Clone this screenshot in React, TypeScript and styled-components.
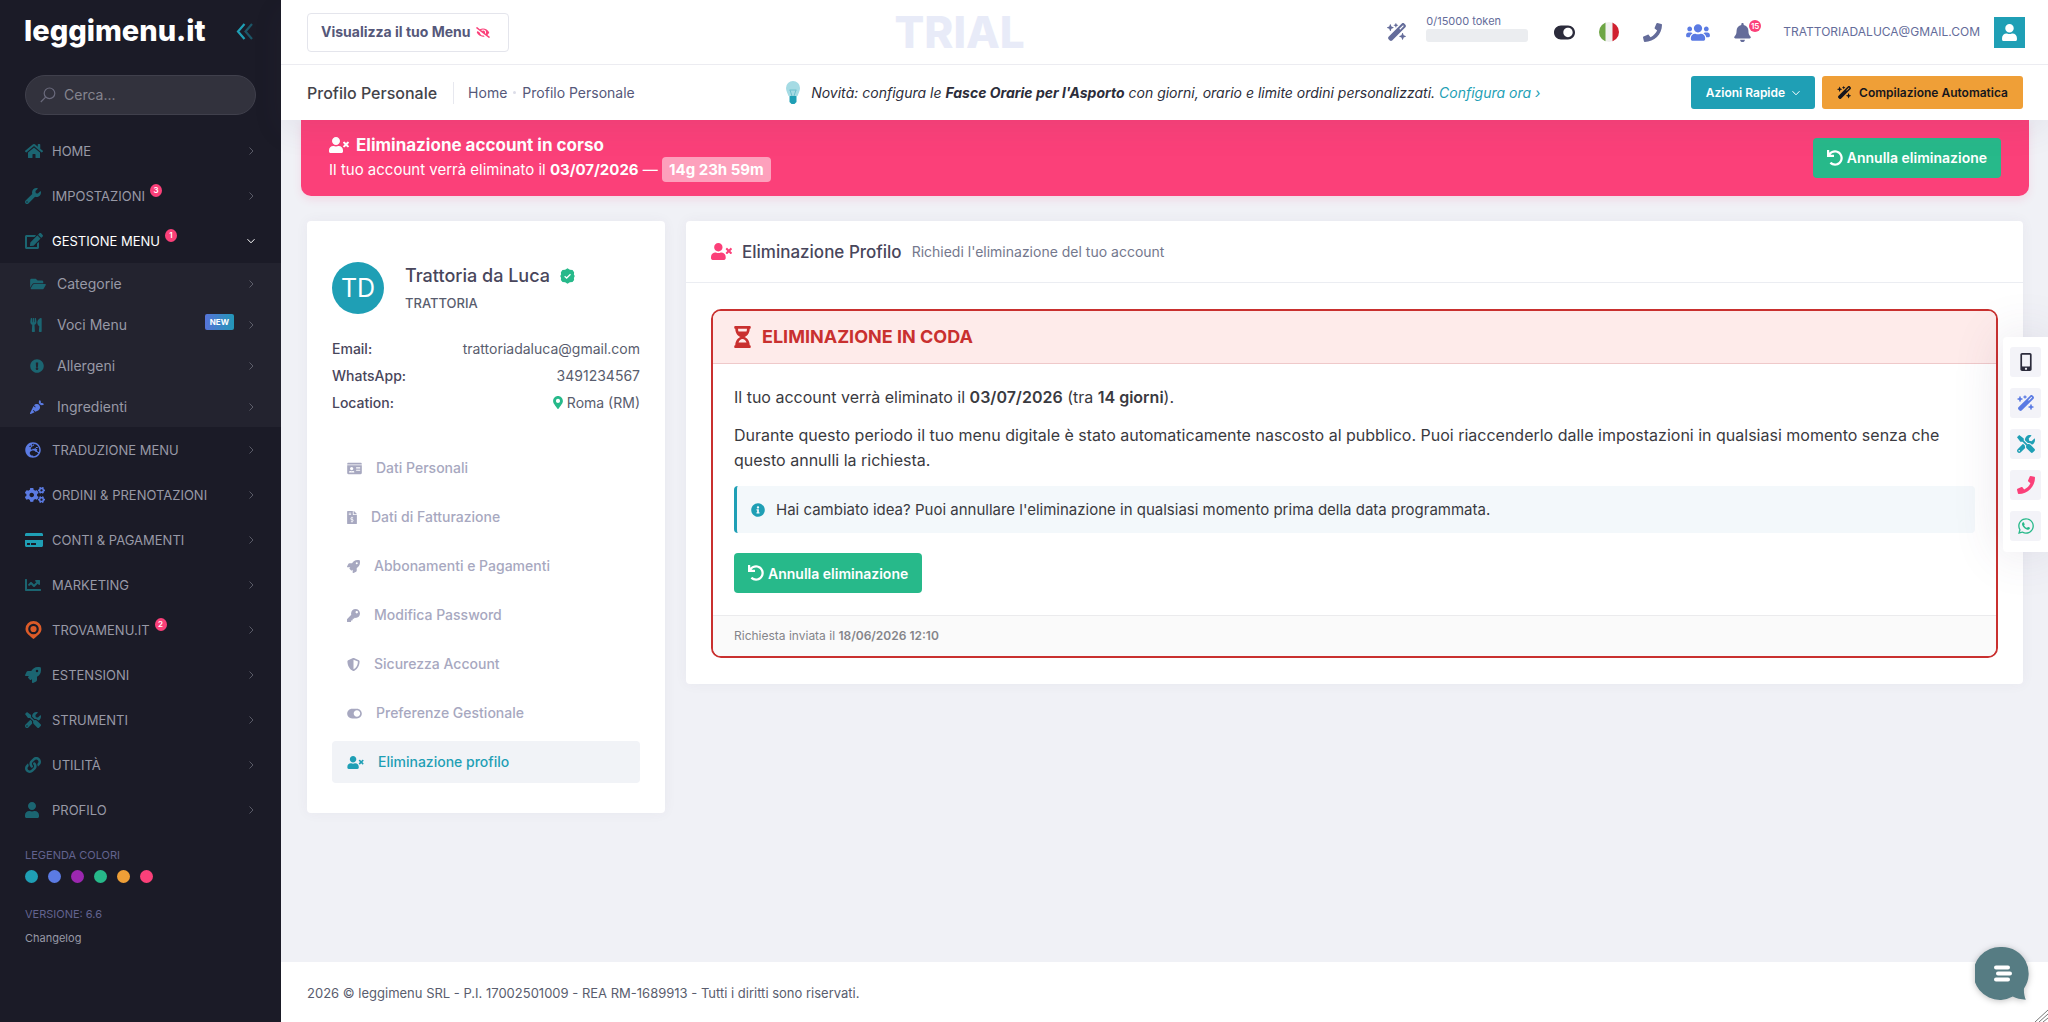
import React from "react";
import styled, { createGlobalStyle, css } from "styled-components";
import {
  FaHome, FaWrench, FaEdit, FaFolderOpen, FaUtensils, FaExclamationCircle, FaCarrot,
  FaGlobeEurope, FaCogs, FaCreditCard, FaChartLine, FaRocket, FaTools, FaLink, FaUser,
  FaEyeSlash, FaToggleOn, FaPhone, FaUsers, FaBell, FaUserTimes, FaMapMarkerAlt, FaIdCard,
  FaFileInvoiceDollar, FaKey, FaShieldAlt, FaHourglassHalf, FaInfoCircle, FaUndo,
  FaMobileAlt, FaWhatsapp,
} from "react-icons/fa";
import { FaWandMagicSparkles } from "react-icons/fa6";

const c = {
  side: "#1b1b27",
  sideSub: "#23232f",
  teal: "#1f9fb5",
  tealDim: "#1b6571",
  blue: "#5b7be3",
  green: "#27b98a",
  pink: "#fb4079",
  orange: "#ef9f37",
  red: "#c9302f",
  violet: "#646c9a",
  ink: "#48465b",
  slate: "#595d6e",
};

const GlobalStyle = createGlobalStyle`
  * { box-sizing: border-box; }
  body {
    margin: 0;
    background: #f0f1f6;
    color: ${c.ink};
    font: 400 14px/20px Inter, "Liberation Sans", sans-serif;
  }
  button, input { font: inherit; }
  button { cursor: pointer; }
  a { color: inherit; text-decoration: none; }
  h1, h2, h3, p, ul, dl, dd { margin: 0; padding: 0; }
  ul { list-style: none; }
`;

const Icon = styled.span<{ $h?: number; $w?: number; $color?: string }>`
  display: inline-flex;
  flex: none;
  color: ${(p) => p.$color ?? "inherit"};
  svg {
    display: block;
    flex: none;
    width: ${(p) => p.$w ?? p.$h ?? 16}px;
    height: ${(p) => p.$h ?? 16}px;
  }
`;

const Shell = styled.div`
  display: flex;
  min-height: 100vh;
`;

/* ---------- Sidebar ---------- */
const Sidebar = styled.aside`
  flex: none;
  width: 281px;
  background: ${c.side};
  color: #9899a6;
`;
const Brand = styled.div`
  display: flex;
  align-items: center;
  justify-content: space-between;
  height: 64px;
  padding: 0 27px 2px 24px;
`;
const Logo = styled.a`
  color: #fff;
  font-size: 29px;
  line-height: 40px;
  font-weight: 800;
`;
const BareButton = styled.button`
  display: inline-flex;
  align-items: center;
  padding: 0;
  border: 0;
  background: none;
  color: inherit;
`;
const SearchBox = styled.label`
  display: flex;
  align-items: center;
  gap: 8px;
  height: 40px;
  margin: 11px 25px 13px;
  padding: 0 14px;
  border: 1px solid #40404c;
  border-radius: 20px;
  background: #32323d;
  input {
    flex: 1;
    min-width: 0;
    padding: 0;
    border: 0;
    outline: 0;
    background: none;
    color: #fff;
    font-size: 14px;
    &::placeholder { color: #85858f; opacity: 1; }
  }
`;
const NavLink = styled.a<{ $sub?: boolean; $active?: boolean }>`
  display: flex;
  align-items: center;
  height: ${(p) => (p.$sub ? 41 : 45)}px;
  padding: 0 26px 0 ${(p) => (p.$sub ? 30 : 25)}px;
  color: ${(p) => (p.$active ? "#fff" : "#9899a6")};
  font-size: ${(p) => (p.$sub ? 14 : 13)}px;
`;
const NavIcon = styled(Icon)`
  width: 27px;
`;
const SubList = styled.ul`
  background: ${c.sideSub};
`;
const Count = styled.span`
  display: grid;
  place-items: center;
  align-self: flex-start;
  width: 12px;
  height: 13px;
  margin: 11px 0 0 5px;
  border-radius: 50%;
  background: ${c.pink};
  color: #fff;
  font-size: 8px;
  line-height: 13px;
  font-weight: 600;
`;
const NewTag = styled.span`
  margin-left: auto;
  margin-right: 13px;
  margin-bottom: 5px;
  padding: 0 5px;
  border-radius: 2px;
  background: linear-gradient(90deg, #5673d8, #2397b8);
  color: #fff;
  font-size: 8px;
  line-height: 16px;
  font-weight: 700;
`;
const Chevron = styled.svg<{ $dim?: boolean }>`
  flex: none;
  width: 8px;
  height: 8px;
  fill: none;
  stroke: currentColor;
  opacity: ${(p) => (p.$dim ? 0.5 : 1)};
  margin-left: auto;
  ${NewTag} + & { margin-left: 0; }
`;
const SideNote = styled.div`
  padding: 13px 25px 0;
  font-size: 11px;
  line-height: 20px;
`;
const SideCaption = styled.div`
  color: #62638f;
`;
const Dots = styled.div`
  display: flex;
  gap: 10px;
  padding: 5px 0 21px;
`;
const Dot = styled.span<{ $color: string }>`
  width: 13px;
  height: 13px;
  border-radius: 50%;
  background: ${(p) => p.$color};
`;
const Changelog = styled.a`
  display: block;
  margin-top: 4px;
  color: #9899a6;
`;

/* ---------- Top bars ---------- */
const Main = styled.div`
  display: flex;
  flex: 1;
  flex-direction: column;
  min-width: 0;
`;
const Bars = styled.header`
  position: relative;
  z-index: 2;
  background: #fff;
  box-shadow: 0 10px 30px rgba(82, 63, 105, 0.08);
`;
const Bar = styled.div<{ $h: number; $line?: boolean }>`
  display: flex;
  align-items: center;
  justify-content: space-between;
  height: ${(p) => p.$h}px;
  padding: 0 ${(p) => (p.$line ? 23 : 25)}px 0 26px;
  border-bottom: ${(p) => (p.$line ? "1px solid #ececf1" : "0")};
`;
const PreviewButton = styled.button`
  display: flex;
  align-items: center;
  gap: 6px;
  height: 39px;
  padding: 0 18px 0 13px;
  border: 1px solid #e4e5ec;
  border-radius: 4px;
  background: #fff;
  color: #55587a;
  font-size: 14px;
  font-weight: 700;
`;
const Trial = styled.div`
  flex: 1;
  padding-left: 385px;
  color: #e8ebf8;
  font-size: 44px;
  line-height: 56px;
  font-weight: 800;
`;
const Tools = styled.div`
  display: flex;
  align-items: center;
  gap: 24px;
  color: ${c.violet};
`;
const TokenMeter = styled.div`
  width: 102px;
  margin: 0 2px 10px -5px;
  color: #646c9a;
  font-size: 11px;
  line-height: 16px;
`;
const Track = styled.div`
  height: 13px;
  border-radius: 3px;
  background: #ebedf0;
`;
const BellWrap = styled(BareButton)`
  position: relative;
`;
const BellCount = styled.span`
  position: absolute;
  top: -3px;
  right: -10px;
  padding: 0 2px;
  border-radius: 7px;
  background: ${c.pink};
  color: #fff;
  font-size: 8px;
  line-height: 12px;
  font-weight: 600;
`;
const Account = styled.a`
  display: flex;
  align-items: center;
  gap: 14px;
  margin-left: 8px;
  font-size: 12px;
`;
const AccountTile = styled.span`
  display: grid;
  place-items: center;
  width: 31px;
  height: 31px;
  background: ${c.teal};
  color: #fff;
`;
const Crumbs = styled.nav`
  display: flex;
  align-items: center;
  gap: 14px;
  color: #55587a;
  font-size: 14px;
`;
const PageTitle = styled.h1`
  padding-right: 16px;
  border-right: 1px solid #e7e8ef;
  color: #434349;
  font-size: 16px;
  line-height: 22px;
  font-weight: 500;
`;
const CrumbDot = styled.span`
  width: 3px;
  height: 3px;
  margin: 0 -8px;
  border-radius: 50%;
  background: #dcdde8;
`;
const News = styled.p`
  display: flex;
  align-items: center;
  gap: 10px;
  color: #2c2d3a;
  font-size: 14px;
  font-style: italic;
  a { color: ${c.teal}; }
`;
const Actions = styled.div`
  display: flex;
  gap: 7px;
`;
const ActionButton = styled.button<{ $bg: string; $fg: string }>`
  display: flex;
  align-items: center;
  gap: 7px;
  height: 33px;
  padding: 0 15px;
  border: 0;
  border-radius: 3px;
  background: ${(p) => p.$bg};
  color: ${(p) => p.$fg};
  font-size: 12px;
  font-weight: 600;
`;

/* ---------- Banner ---------- */
const Banner = styled.section`
  display: flex;
  align-items: center;
  justify-content: space-between;
  height: 76px;
  margin: 0 19px 0 20px;
  padding: 0 28px;
  border-radius: 0 0 10px 10px;
  background: ${c.pink};
  box-shadow: 0 4px 8px rgba(251, 64, 121, 0.12);
  color: #fff;
  font-size: 15px;
  line-height: 24px;
`;
const BannerText = styled.div`
  padding-bottom: 3px;
`;
const BannerTitle = styled.h2`
  display: flex;
  align-items: center;
  gap: 7px;
  font-size: 17px;
  line-height: 26px;
  font-weight: 700;
`;
const Countdown = styled.strong`
  padding: 3px 7px;
  border-radius: 4px;
  background: rgba(255, 255, 255, 0.5);
`;
const GreenButton = styled.button`
  display: inline-flex;
  align-items: center;
  gap: 4px;
  height: 40px;
  padding: 0 14px;
  border: 0;
  border-radius: 4px;
  background: ${c.green};
  color: #fff;
  font-size: 14px;
  font-weight: 600;
`;

/* ---------- Content ---------- */
const Content = styled.main`
  display: flex;
  flex: 1;
  align-items: flex-start;
  gap: 21px;
  padding: 25px 25px 40px 26px;
`;
const Card = styled.section`
  border-radius: 4px;
  background: #fff;
  box-shadow: 0 0 13px rgba(82, 63, 105, 0.05);
`;
const ProfileCard = styled(Card)`
  flex: none;
  width: 358px;
  padding: 41px 25px 30px;
`;
const Person = styled.div`
  display: flex;
  align-items: center;
  gap: 21px;
`;
const Avatar = styled.div`
  display: grid;
  place-items: center;
  width: 52px;
  height: 52px;
  border-radius: 50%;
  background: ${c.teal};
  color: #fff;
  font-size: 25px;
`;
const PersonName = styled.h2`
  display: flex;
  align-items: center;
  gap: 10px;
  font-size: 18px;
  line-height: 26px;
  font-weight: 500;
`;
const PersonKind = styled.div`
  margin-top: 3px;
  color: ${c.slate};
  font-size: 13px;
  line-height: 22px;
  font-weight: 500;
`;
const Facts = styled.dl`
  margin: 21px 0 31px;
  font-size: 14px;
  line-height: 27px;
  div { display: flex; justify-content: space-between; }
  dt { font-weight: 500; }
  dd { display: flex; align-items: center; gap: 4px; color: ${c.slate}; }
`;
const Menu = styled.ul`
  display: grid;
  gap: 7px;
`;
const MenuLink = styled.a<{ $active?: boolean }>`
  display: flex;
  align-items: center;
  gap: 14px;
  height: 42px;
  padding: 0 15px;
  border-radius: 4px;
  color: #a7a8c0;
  font-size: 14px;
  font-weight: 500;
  ${(p) => p.$active && css`background: #f1f3f7; color: ${c.teal};`}
`;
const MainCard = styled(Card)`
  flex: 1;
  min-width: 0;
`;
const CardHead = styled.header`
  display: flex;
  align-items: center;
  height: 62px;
  padding: 0 25px;
  border-bottom: 1px solid #ebedf2;
  h2 { margin: 0 10px; font-size: 17px; font-weight: 500; }
  p { color: #74788d; font-size: 14px; }
`;
const Queue = styled.article`
  margin: 26px 25px;
  overflow: hidden;
  border: 2px solid ${c.red};
  border-radius: 10px;
  color: #3a3a3f;
`;
const QueueHead = styled.h3`
  display: flex;
  align-items: center;
  gap: 11px;
  height: 53px;
  padding: 0 21px;
  border-bottom: 1px solid #efc9ca;
  background: #feebea;
  color: ${c.red};
  font-size: 18px;
  font-weight: 700;
`;
const QueueBody = styled.div`
  padding: 21px 21px 22px;
  font-size: 16px;
  line-height: 25px;
  p { margin-bottom: 13px; }
  strong { font-weight: 600; }
`;
const Hint = styled.div`
  display: flex;
  align-items: center;
  gap: 11px;
  height: 47px;
  margin: 13px 0 20px;
  padding: 0 14px;
  border-left: 3px solid ${c.teal};
  border-radius: 4px;
  background: #f3f8fb;
  font-size: 15px;
`;
const QueueFoot = styled.footer`
  padding: 10px 21px;
  border-top: 1px solid #ebebed;
  background: #fafafa;
  color: #85858a;
  font-size: 12px;
  line-height: 20px;
  strong { font-weight: 600; }
`;
const Footer = styled.footer`
  display: flex;
  align-items: center;
  height: 60px;
  padding: 2px 26px 0;
  background: #fff;
  color: ${c.slate};
  font-size: 13px;
`;

/* ---------- Floating items ---------- */
const Dock = styled.nav`
  position: fixed;
  z-index: 3;
  top: 337px;
  right: 0;
  display: grid;
  gap: 11px;
  padding: 10px 7px 11px;
  border-radius: 4px 0 0 4px;
  background: #fff;
  box-shadow: 0 0 50px rgba(82, 63, 105, 0.15);
`;
const DockButton = styled.button<{ $color: string }>`
  display: grid;
  place-items: center;
  width: 31px;
  height: 30px;
  padding: 0;
  border: 0;
  border-radius: 3px;
  background: #f3f3f8;
  color: ${(p) => p.$color};
`;
const ChatButton = styled(BareButton)`
  position: fixed;
  z-index: 4;
  right: 19px;
  bottom: 20px;
  filter: drop-shadow(0 1px 3px rgba(0, 0, 0, 0.25));
`;
const Grip = styled.svg`
  position: fixed;
  right: 0;
  bottom: 0;
`;

const Right = () => (
  <Chevron $dim viewBox="0 0 8 8"><path d="M2.500.500 6 4 2.500 7.500" /></Chevron>
);
const Down = () => (
  <Chevron viewBox="0 0 8 8"><path d="M.500 2.200 4 5.800 7.500 2.200" /></Chevron>
);
const Pin = () => (
  <svg viewBox="0 0 17 18">
    <path d="M8.500 0a8 8 0 0 1 8 8c0 4.200-4.500 7-8 10C5 15 .500 12.200.500 8a8 8 0 0 1 8-8Z" fill="#dc5b28" />
    <circle cx="8.500" cy="8" r="4.200" fill="#dc5b28" stroke={c.side} strokeWidth="2.200" />
  </svg>
);
const Collapse = () => (
  <svg width="18" height="17" viewBox="0 0 18 17" fill="none" strokeWidth="2.200" stroke={c.teal}>
    <path d="M8.500 1 2 8.500l6.500 7.500" />
    <path d="M16 1 9.500 8.500 16 16" opacity=".45" />
  </svg>
);
const SearchGlyph = () => (
  <svg width="16" height="16" viewBox="0 0 16 16" fill="none" stroke="#6a6a7c" strokeWidth="1.200">
    <circle cx="9.500" cy="6.300" r="5.300" />
    <path d="M5.600 10.200.800 15" />
  </svg>
);
const Bulb = () => (
  <svg width="16" height="24" viewBox="0 0 16 24">
    <path d="M8 0a7 7 0 0 1 7 7c0 3-1.500 5-2.500 8h-9C2.500 12 1 10 1 7a7 7 0 0 1 7-7Z" fill="#a5dbe4" />
    <path d="M5 9l2 6M11 9l-2 6M4.500 9h7" stroke="#6fc0cd" fill="none" />
    <path d="M4.500 15h7v6l-2 2h-3l-2-2Z" fill={c.teal} />
  </svg>
);
const Flag = () => (
  <svg width="20" height="20" viewBox="0 0 20 20">
    <clipPath id="flag-round"><circle cx="10" cy="10" r="10" /></clipPath>
    <g clipPath="url(#flag-round)">
      <path fill="#f0f0f0" d="M0 0h20v20H0z" />
      <path fill="#6da544" d="M0 0h6.500v20H0z" />
      <path fill="#d0202f" d="M13.500 0H20v20h-6.500z" />
    </g>
  </svg>
);
const Verified = () => (
  <svg width="15" height="16" viewBox="0 0 14 15">
    <path d="M7 .3 9.200 1.700 11.700 1.800 13.200 4 13 6 13.800 7.500 13 9.300 13.200 11.300 11.700 13.200 9.200 13.300 7 14.700 4.800 13.300 2.300 13.200.800 11.300 1 9.300.200 7.500 1 6 .800 4 2.300 1.800 4.800 1.700Z" fill={c.green} />
    <path d="M4.300 7.700 6.200 9.400 9.800 5.900" stroke="#fff" fill="none" strokeWidth="1.200" />
  </svg>
);
const Bubble = () => (
  <svg width="54" height="56" viewBox="0 0 54 56">
    <path d="M27 1a26.500 26.500 0 0 1 22 41.500c-.400 4 .500 8 1.800 11.200-5-.300-9.500-1.200-13-3.100A26.500 26.500 0 1 1 27 1Z" fill="#567c83" />
    <g fill="#fff">
      <rect x="19" y="19.500" width="16" height="4" rx="2" />
      <rect x="21" y="25.500" width="16" height="4" rx="2" />
      <rect x="19" y="31.500" width="16" height="4" rx="2" />
    </g>
  </svg>
);

type Entry = {
  label: string;
  icon: React.ReactNode;
  color: string;
  w?: number;
  h?: number;
  count?: number;
  tag?: string;
};

const before: Entry[] = [
  { label: "HOME", icon: <FaHome />, color: c.tealDim, w: 18 },
  { label: "IMPOSTAZIONI", icon: <FaWrench />, color: c.tealDim, count: 3 },
];
const dishes: Entry[] = [
  { label: "Categorie", icon: <FaFolderOpen />, color: c.tealDim, w: 16 },
  { label: "Voci Menu", icon: <FaUtensils />, color: c.tealDim, w: 12, tag: "NEW" },
  { label: "Allergeni", icon: <FaExclamationCircle />, color: c.tealDim, w: 14 },
  { label: "Ingredienti", icon: <FaCarrot />, color: c.blue, w: 14 },
];
const after: Entry[] = [
  { label: "TRADUZIONE MENU", icon: <FaGlobeEurope />, color: c.blue },
  { label: "ORDINI & PRENOTAZIONI", icon: <FaCogs />, color: c.blue, w: 20 },
  { label: "CONTI & PAGAMENTI", icon: <FaCreditCard />, color: c.teal, w: 18 },
  { label: "MARKETING", icon: <FaChartLine />, color: c.tealDim },
  { label: "TROVAMENU.IT", icon: <Pin />, color: c.orange, w: 17, h: 18, count: 2 },
  { label: "ESTENSIONI", icon: <FaRocket />, color: c.tealDim },
  { label: "STRUMENTI", icon: <FaTools />, color: c.tealDim },
  { label: "UTILITÀ", icon: <FaLink />, color: c.tealDim },
  { label: "PROFILO", icon: <FaUser />, color: c.tealDim, w: 14 },
];

const NavItem = ({ item, sub }: { item: Entry; sub?: boolean }) => (
  <li>
    <NavLink href="#" $sub={sub}>
      <NavIcon $h={item.h ?? (sub ? 14 : 16)} $w={item.w} $color={item.color}>{item.icon}</NavIcon>
      {item.label}
      {item.count && <Count>{item.count}</Count>}
      {item.tag && <NewTag>{item.tag}</NewTag>}
      <Right />
    </NavLink>
  </li>
);

const profileMenu = [
  { label: "Dati Personali", icon: <FaIdCard />, w: 15 },
  { label: "Dati di Fatturazione", icon: <FaFileInvoiceDollar />, w: 10 },
  { label: "Abbonamenti e Pagamenti", icon: <FaRocket />, w: 13 },
  { label: "Modifica Password", icon: <FaKey />, w: 13 },
  { label: "Sicurezza Account", icon: <FaShieldAlt />, w: 13 },
  { label: "Preferenze Gestionale", icon: <FaToggleOn />, w: 15 },
  { label: "Eliminazione profilo", icon: <FaUserTimes />, w: 17, active: true },
];

const dock = [
  { label: "Anteprima", icon: <FaMobileAlt />, color: "#2b2b3b" },
  { label: "Compilazione", icon: <FaWandMagicSparkles />, color: c.blue },
  { label: "Strumenti", icon: <FaTools />, color: c.teal },
  { label: "Telefono", icon: <FaPhone />, color: c.pink },
  { label: "WhatsApp", icon: <FaWhatsapp />, color: c.green },
];

const CancelButton = () => (
  <GreenButton type="button"><Icon $h={16}><FaUndo /></Icon>Annulla eliminazione</GreenButton>
);

export default function App() {
  return (
    <>
      <GlobalStyle />
      <Shell>
        <Sidebar>
          <Brand>
            <Logo href="#">leggimenu.it</Logo>
            <BareButton type="button" aria-label="Comprimi menu"><Collapse /></BareButton>
          </Brand>
          <SearchBox>
            <SearchGlyph />
            <input type="text" placeholder="Cerca..." aria-label="Cerca" />
          </SearchBox>
          <nav>
            <ul>
              {before.map((item) => <NavItem key={item.label} item={item} />)}
              <li>
                <NavLink href="#" $active>
                  <NavIcon $w={18} $color={c.tealDim}><FaEdit /></NavIcon>
                  GESTIONE MENU
                  <Count>1</Count>
                  <Down />
                </NavLink>
                <SubList>
                  {dishes.map((item) => <NavItem key={item.label} item={item} sub />)}
                </SubList>
              </li>
              {after.map((item) => <NavItem key={item.label} item={item} />)}
            </ul>
          </nav>
          <SideNote>
            <SideCaption>LEGENDA COLORI</SideCaption>
            <Dots>
              {[c.teal, c.blue, "#9c27b0", c.green, c.orange, c.pink].map((color) => (
                <Dot key={color} $color={color} />
              ))}
            </Dots>
            <SideCaption>VERSIONE: 6.6</SideCaption>
            <Changelog href="#">Changelog</Changelog>
          </SideNote>
        </Sidebar>

        <Main>
          <Bars>
            <Bar $h={65} $line>
              <PreviewButton type="button">
                Visualizza il tuo Menu
                <Icon $h={11} $w={14} $color={c.pink}><FaEyeSlash /></Icon>
              </PreviewButton>
              <Trial>TRIAL</Trial>
              <Tools>
                <Icon $h={18} $w={20}><FaWandMagicSparkles /></Icon>
                <TokenMeter>0/15000 token<Track /></TokenMeter>
                <Icon $h={19} $w={21} $color="#2b2b3b"><FaToggleOn /></Icon>
                <Flag />
                <Icon $h={19}><FaPhone /></Icon>
                <Icon $h={19} $w={24} $color={c.blue}><FaUsers /></Icon>
                <BellWrap type="button" aria-label="Notifiche">
                  <Icon $h={19} $w={17}><FaBell /></Icon>
                  <BellCount>15</BellCount>
                </BellWrap>
                <Account href="#">
                  TRATTORIADALUCA@GMAIL.COM
                  <AccountTile><Icon $h={17} $w={15}><FaUser /></Icon></AccountTile>
                </Account>
              </Tools>
            </Bar>
            <Bar $h={55}>
              <Crumbs>
                <PageTitle>Profilo Personale</PageTitle>
                <a href="#">Home</a>
                <CrumbDot />
                <a href="#">Profilo Personale</a>
              </Crumbs>
              <News>
                <Bulb />
                <span>
                  Novità: configura le <strong>Fasce Orarie per l'Asporto</strong> con giorni, orario e
                  limite ordini personalizzati. <a href="#">Configura ora &#8250;</a>
                </span>
              </News>
              <Actions>
                <ActionButton type="button" $bg={c.teal} $fg="#fff">Azioni Rapide <Down /></ActionButton>
                <ActionButton type="button" $bg={c.orange} $fg="#16161d">
                  <Icon $h={13} $w={15}><FaWandMagicSparkles /></Icon>Compilazione Automatica
                </ActionButton>
              </Actions>
            </Bar>
          </Bars>

          <Banner>
            <BannerText>
              <BannerTitle><Icon $h={16} $w={20}><FaUserTimes /></Icon>Eliminazione account in corso</BannerTitle>
              <p>
                Il tuo account verrà eliminato il <strong>03/07/2026</strong> — <Countdown>14g 23h 59m</Countdown>
              </p>
            </BannerText>
            <CancelButton />
          </Banner>

          <Content>
            <ProfileCard>
              <Person>
                <Avatar>TD</Avatar>
                <div>
                  <PersonName>Trattoria da Luca <Verified /></PersonName>
                  <PersonKind>TRATTORIA</PersonKind>
                </div>
              </Person>
              <Facts>
                <div><dt>Email:</dt><dd>trattoriadaluca@gmail.com</dd></div>
                <div><dt>WhatsApp:</dt><dd>3491234567</dd></div>
                <div>
                  <dt>Location:</dt>
                  <dd><Icon $h={13} $w={10} $color={c.green}><FaMapMarkerAlt /></Icon>Roma (RM)</dd>
                </div>
              </Facts>
              <Menu>
                {profileMenu.map((m) => (
                  <li key={m.label}>
                    <MenuLink href="#" $active={m.active}>
                      <Icon $h={13} $w={m.w}>{m.icon}</Icon>{m.label}
                    </MenuLink>
                  </li>
                ))}
              </Menu>
            </ProfileCard>

            <MainCard>
              <CardHead>
                <Icon $h={17} $w={21} $color={c.pink}><FaUserTimes /></Icon>
                <h2>Eliminazione Profilo</h2>
                <p>Richiedi l'eliminazione del tuo account</p>
              </CardHead>
              <Queue>
                <QueueHead><Icon $h={22} $w={17}><FaHourglassHalf /></Icon>ELIMINAZIONE IN CODA</QueueHead>
                <QueueBody>
                  <p>Il tuo account verrà eliminato il <strong>03/07/2026</strong> (tra <strong>14 giorni</strong>).</p>
                  <p>
                    Durante questo periodo il tuo menu digitale è stato automaticamente nascosto al pubblico.
                    Puoi riaccenderlo dalle impostazioni in qualsiasi momento senza che questo annulli la
                    richiesta.
                  </p>
                  <Hint>
                    <Icon $h={14} $color={c.teal}><FaInfoCircle /></Icon>
                    Hai cambiato idea? Puoi annullare l'eliminazione in qualsiasi momento prima della data programmata.
                  </Hint>
                  <CancelButton />
                </QueueBody>
                <QueueFoot>Richiesta inviata il <strong>18/06/2026 12:10</strong></QueueFoot>
              </Queue>
            </MainCard>
          </Content>
          <Footer>2026 © leggimenu SRL - P.I. 17002501009 - REA RM-1689913 - Tutti i diritti sono riservati.</Footer>
        </Main>
      </Shell>

      <Dock>
        {dock.map((d) => (
          <DockButton key={d.label} type="button" aria-label={d.label} $color={d.color}>
            <Icon $h={18}>{d.icon}</Icon>
          </DockButton>
        ))}
      </Dock>
      <ChatButton type="button" aria-label="Apri chat"><Bubble /></ChatButton>
      <Grip width="14" height="14" viewBox="0 0 14 14" stroke="#777" fill="none">
        <path d="M1 14 14 2M5 14l9-8M9 14l5-4" />
      </Grip>
    </>
  );
}
